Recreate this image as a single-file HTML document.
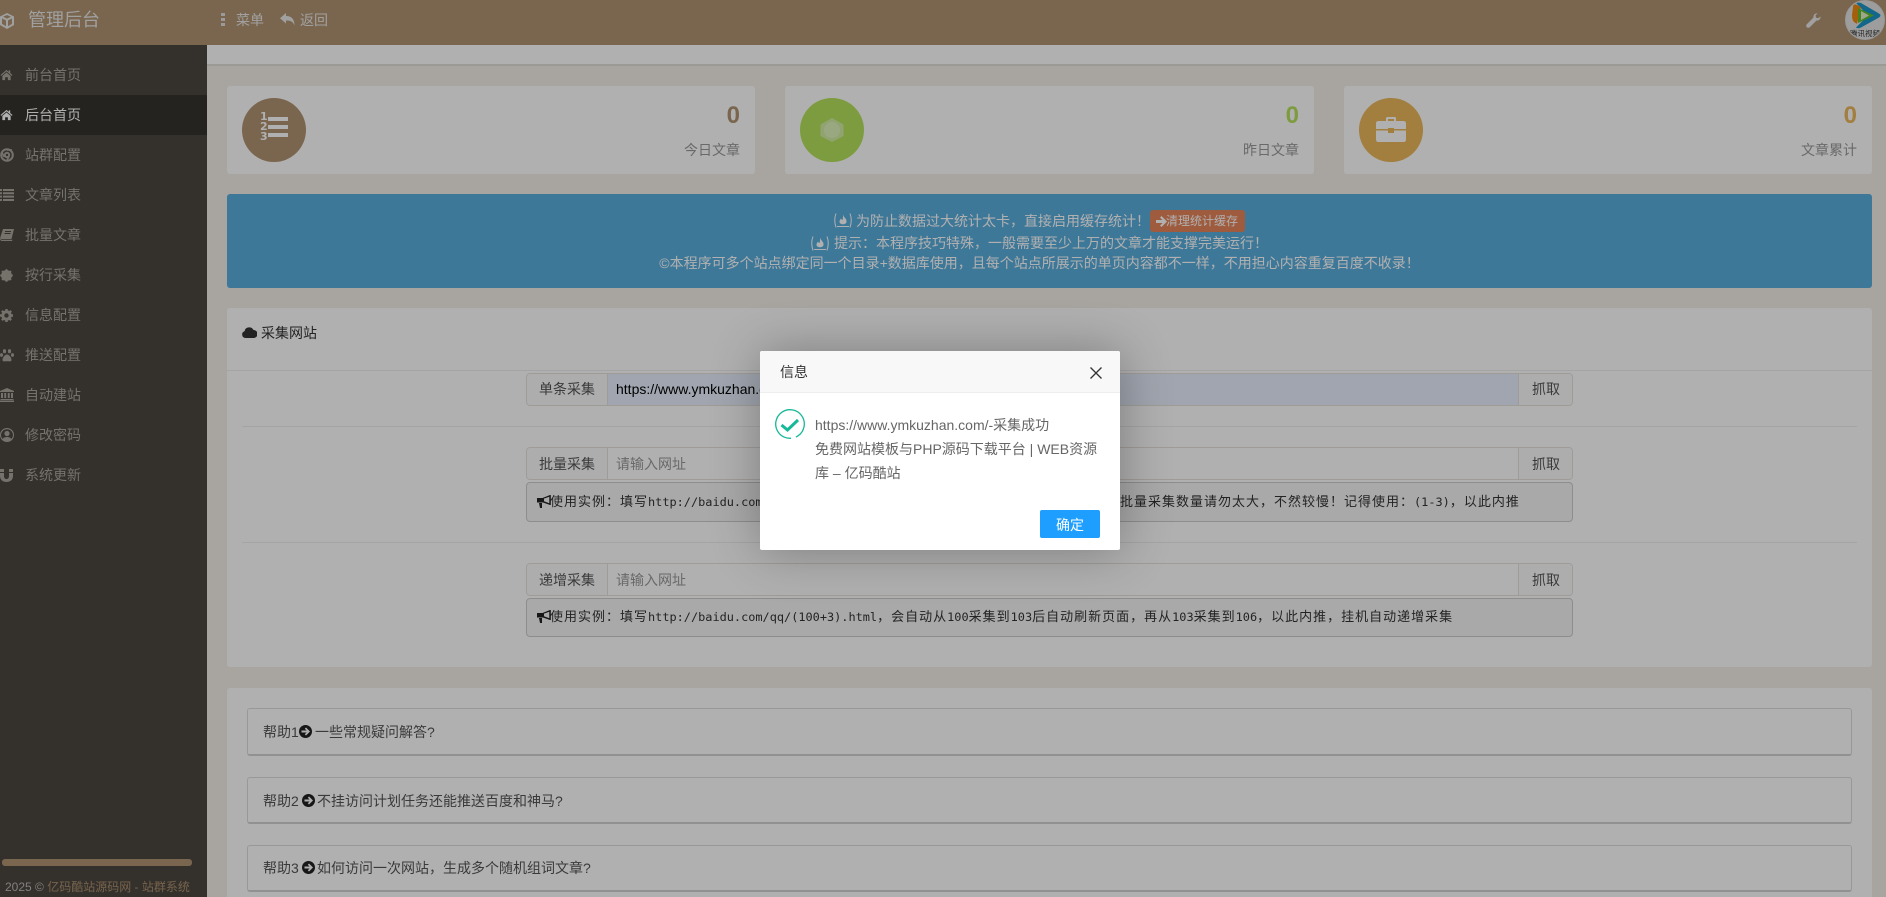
<!DOCTYPE html>
<html lang="zh"><head><meta charset="utf-8"><title>管理后台</title>
<style>
*{box-sizing:border-box}
html,body{margin:0;padding:0;width:1886px;height:897px;overflow:hidden}
body{position:relative;background:#f3f0ea;font:14px/20px "Liberation Sans","Noto Sans CJK SC",sans-serif;color:#555}
.a{position:absolute}
.t{position:absolute;white-space:nowrap;line-height:20px}
svg{display:block}
svg.a{position:absolute}
#nav{left:0;top:0;width:1886px;height:45px;background:#b19471}
#side{left:0;top:45px;width:207px;height:852px;background:#4c4640}
.si{color:#aaa59d}
.card{background:#fff;top:86px;height:88px;border-radius:3px}
.circ{top:98px;width:64px;height:64px;border-radius:50%}
.num{font-size:24px;font-weight:700;line-height:30px;top:101px}
.lab{top:140px;color:#999}
.grp{left:526px;width:1047px;height:33px;background:#fff;border:1px solid #e6e3dc;border-radius:4px}
.ad{background:#fbfbfb;color:#555}
.pre{left:526px;width:1047px;background:#f5f5f5;border:1px solid #ccc;border-radius:4px}
.pt{position:absolute;white-space:pre;font:13px/20px "Liberation Sans","Noto Sans CJK SC",sans-serif;letter-spacing:1px;color:#333}
.pt i{font:normal 11.9px/20px "DejaVu Sans Mono",monospace;letter-spacing:0}
.help{left:247px;width:1605px;background:#fff;border:1px solid #ddd;border-bottom:2px solid #d2d2d2;border-radius:3px}
.al{position:absolute;color:#fff;line-height:22px;white-space:nowrap}
#ov{left:0;top:0;width:1886px;height:897px;background:rgba(0,0,0,.31)}
#m{left:760px;top:351px;width:360px;height:199px;background:#fff;border-radius:2px;box-shadow:1px 1px 50px rgba(0,0,0,.3)}
</style></head><body>

<div class="a" id="nav"></div>
<svg class="a" style="left:-1px;top:12px" width="16" height="18" viewBox="0 0 16 18" fill="#e8e8e8"><path d="M8 1L15 4.5V13L8 17L1 13V4.5ZM8 3L4 4.8L8 6.6L12 4.8ZM3 6.4V11.9L7 14.3V8.4ZM13 6.4L9 8.4V14.3L13 11.9Z" fill-rule="evenodd"/></svg>
<div class="t" style="left:28px;top:9px;font-size:18px;line-height:22px;color:#e8e8e8">管理后台</div>
<svg class="a" style="left:221px;top:13px" width="5" height="13" fill="#e0e0e0"><rect x="0" width="4" height="3"/><rect y="5" width="4" height="3"/><rect y="10" width="4" height="3"/></svg>
<div class="t" style="left:236px;top:10px;color:#e8e8e8">菜单</div>
<svg class="a" style="left:280px;top:13px" width="15" height="13" viewBox="0 0 15 13" fill="#e8e8e8"><path d="M6 0V3C11 3 14.5 5.500 14.500 12.500C13 8.500 10.500 7.500 6 7.500V10.500L0 5.200Z"/></svg>
<div class="t" style="left:300px;top:10px;color:#e8e8e8">返回</div>
<svg class="a" style="left:1806px;top:13px" width="15" height="15" viewBox="0 0 15 15" fill="#e8e8e8"><path d="M14.500 3.500C14.800 5.800 13 8 10.500 7.500L4 14C3 15 1.500 15 .7 14.100C-.1 13.300 0 12 1 11L7.500 4.500C7.200 2 9 .2 11.500 .3L9.500 2.500L10 4.800L12.300 5.300Z"/></svg>
<div class="a" style="left:1845px;top:0;width:40px;height:40px;border-radius:50%;background:#e4e4e4;border:1px solid #ddd;overflow:hidden">
<svg class="a" style="left:4px;top:1px" width="32" height="27" viewBox="0 0 32 27"><path d="M6 1Q8 0 11 1L29 11.500Q32 13.500 29 15.500L11 25.500Q8 27 6 25.500L18 13.500Z" fill="#1c96c8"/><path d="M3 5Q3 2 6 2.500L11 5L7 22L4 20Q2 18 2 13Z" fill="#ee8a12"/><path d="M8 6L24 13.500L8 21Z" fill="#62bf2c"/><path d="M11 9L19 13.500L11 18Z" fill="#e6f0cf"/></svg>
<div class="t" style="left:4px;top:28px;font-size:7.500px;line-height:9px;color:#333">腾讯视频</div>
</div>

<div class="a" id="side"></div>
<div class="a" style="left:0;top:95px;width:207px;height:40px;background:#36332e"></div>
<div class="t si" style="left:25px;top:65px">前台首页</div>
<div class="t" style="left:25px;top:105px;color:#fff">后台首页</div>
<div class="t si" style="left:25px;top:145px">站群配置</div>
<div class="t si" style="left:25px;top:185px">文章列表</div>
<div class="t si" style="left:25px;top:225px">批量文章</div>
<div class="t si" style="left:25px;top:265px">按行采集</div>
<div class="t si" style="left:25px;top:305px">信息配置</div>
<div class="t si" style="left:25px;top:345px">推送配置</div>
<div class="t si" style="left:25px;top:385px">自动建站</div>
<div class="t si" style="left:25px;top:425px">修改密码</div>
<div class="t si" style="left:25px;top:465px">系统更新</div>
<!-- sidebar icons -->
<svg class="a" style="left:0;top:69px" width="13" height="12" viewBox="0 0 14 13" fill="#aaa59d"><path d="M7 1L.5 6.500L1.300 7.400L7 2.600L12.700 7.400L13.500 6.500L11 4.400V1.500H9.500V3.100ZM2.500 7.500V12H5.500V9H8.500V12H11.500V7.500L7 3.800Z"/></svg>
<svg class="a" style="left:0;top:109px" width="13" height="12" viewBox="0 0 14 13" fill="#fff"><path d="M7 1L.5 6.500L1.300 7.400L7 2.600L12.700 7.400L13.500 6.500L11 4.400V1.500H9.500V3.100ZM2.500 7.500V12H5.500V9H8.500V12H11.500V7.500L7 3.800Z"/></svg>
<svg class="a" style="left:0;top:148px" width="14" height="14" viewBox="0 0 14 14" fill="none" stroke="#aaa59d" stroke-width="2"><circle cx="7" cy="7" r="5.800"/><circle cx="7" cy="7" r="2.200"/><path d="M7 2H12M4 9L2 4M9 9L7 12" stroke-width="1.500"/></svg>
<svg class="a" style="left:0;top:189px" width="14" height="12" viewBox="0 0 14 12" fill="#aaa59d"><path d="M0 0H2V2H0ZM3 0H14V2H3ZM0 3.300H2V5.300H0ZM3 3.300H14V5.300H3ZM0 6.600H2V8.600H0ZM3 6.600H14V8.600H3ZM0 10H2V12H0ZM3 10H14V12H3Z"/></svg>
<svg class="a" style="left:0;top:229px" width="14" height="12" viewBox="0 0 14 12" fill="#aaa59d"><path d="M3 0H14L11.500 10H1C.2 10 0 9.300 .2 8.500ZM5 2V3H11V2ZM4.500 4V5H10.500V4ZM0 10Q.5 12 2 12H12L12.500 10.800H2Q1 10.800 1 10Z" fill-rule="evenodd"/></svg>
<svg class="a" style="left:0;top:269px" width="13" height="13" viewBox="0 0 13 13" fill="#aaa59d"><circle cx="6.500" cy="6.500" r="5.400"/><circle cx="6.500" cy="1.300" r="1.200"/><circle cx="6.500" cy="11.700" r="1.200"/><circle cx="1.300" cy="6.500" r="1.200"/><circle cx="11.700" cy="6.500" r="1.200"/><circle cx="2.800" cy="2.800" r="1.200"/><circle cx="10.200" cy="2.800" r="1.200"/><circle cx="2.800" cy="10.200" r="1.200"/><circle cx="10.200" cy="10.200" r="1.200"/></svg>
<svg class="a" style="left:0;top:309px" width="13" height="13" viewBox="0 0 13 13"><circle cx="6.500" cy="6.500" r="3.700" fill="none" stroke="#aaa59d" stroke-width="3"/><g stroke="#aaa59d" stroke-width="2.400"><path d="M6.500 0V13M0 6.500H13M1.900 1.900L11.100 11.100M11.100 1.900L1.900 11.100" stroke-dasharray="2.200 8.600"/></g></svg>
<svg class="a" style="left:0;top:349px" width="14" height="13" viewBox="0 0 14 13" fill="#aaa59d"><ellipse cx="4.500" cy="2.200" rx="1.600" ry="2.100"/><ellipse cx="9.500" cy="2.200" rx="1.600" ry="2.100"/><ellipse cx="1.500" cy="6" rx="1.500" ry="1.900"/><ellipse cx="12.500" cy="6" rx="1.500" ry="1.900"/><path d="M7 5.500C9.500 5.500 11.500 9 11.500 11C11.500 13 9 12.300 7 12.300C5 12.300 2.500 13 2.500 11C2.500 9 4.500 5.500 7 5.500Z"/></svg>
<svg class="a" style="left:0;top:388px" width="14" height="14" viewBox="0 0 14 14" fill="#aaa59d"><path d="M7 0L14 3V4H0V3ZM1 5H3V10H1ZM4.300 5H6.200V10H4.300ZM7.800 5H9.700V10H7.800ZM11 5H13V10H11ZM.5 11H13.500V12H.5ZM0 12.500H14V14H0Z"/></svg>
<svg class="a" style="left:0;top:428px" width="14" height="14" viewBox="0 0 14 14" fill="#aaa59d"><path d="M7 0A7 7 0 1 1 7 14A7 7 0 1 1 7 0ZM7 1.200A5.800 5.800 0 0 0 2.700 11C3.500 9.500 5 9 7 9C9 9 10.500 9.500 11.300 11A5.800 5.800 0 0 0 7 1.200Z" fill-rule="evenodd"/><circle cx="7" cy="5.500" r="2.600"/></svg>
<svg class="a" style="left:0;top:469px" width="13" height="13" viewBox="0 0 13 13" fill="#aaa59d"><path d="M0 0H4V3H0ZM9 0H13V3H9ZM0 4H4V7C4 9 5 10 6.500 10C8 10 9 9 9 7V4H13V7C13 11 10 13 6.500 13C3 13 0 11 0 7Z"/></svg>
<div class="a" style="left:2px;top:859px;width:190px;height:7px;background:#b19471;border-radius:3px"></div>
<div class="t" style="left:5px;top:877px;font-size:12px;color:#bbb">2025 © <span style="color:#ae9270">亿码酷站源码网 - 站群系统</span></div>

<!-- sub bar -->
<div class="a" style="left:207px;top:45px;width:1679px;height:19px;background:#fff"></div>
<div class="a" style="left:207px;top:64px;width:1679px;height:2px;background:#e2dfd8"></div>

<!-- cards -->
<div class="a card" style="left:227px;width:528px"></div>
<div class="a card" style="left:785px;width:529px"></div>
<div class="a card" style="left:1344px;width:528px"></div>
<div class="a circ" style="left:242px;background:#b19471"></div>
<div class="a circ" style="left:800px;background:#b5e35d"></div>
<div class="a circ" style="left:1359px;background:#ebb75c"></div>
<div class="t" style="left:260px;top:113px;font:700 11px/8px 'DejaVu Sans',sans-serif;color:#fff">1</div>
<div class="t" style="left:260px;top:123px;font:700 11px/8px 'DejaVu Sans',sans-serif;color:#fff">2</div>
<div class="t" style="left:260px;top:133px;font:700 11px/8px 'DejaVu Sans',sans-serif;color:#fff">3</div>
<div class="a" style="left:268px;top:117px;width:20px;height:4px;background:#fff"></div>
<div class="a" style="left:268px;top:125px;width:20px;height:4px;background:#fff"></div>
<div class="a" style="left:268px;top:133px;width:20px;height:4px;background:#fff"></div>
<svg class="a" style="left:820px;top:118px" width="24" height="24" viewBox="0 0 24 24"><path d="M12 0L23.500 6.500V18L12 24L.5 18V6.500Z" fill="#d3eda3"/><circle cx="12" cy="12" r="8" fill="#dff3bb"/></svg>
<svg class="a" style="left:1376px;top:116px" width="30" height="26" viewBox="0 0 30 26" fill="#fff"><path d="M10 5V2.500Q10 1 11.500 1H18.500Q20 1 20 2.500V5H27.500Q30 5 30 7.500V13H18V12H12V13H0V7.500Q0 5 2.500 5ZM12 3V5H18V3Z" fill-rule="evenodd"/><path d="M0 14.500H12V17H18V14.500H30V23.500Q30 26 27.500 26H2.500Q0 26 0 23.500Z"/></svg>
<div class="t num" style="right:1146px;color:#b19471">0</div>
<div class="t num" style="right:587px;color:#b5e35d">0</div>
<div class="t num" style="right:29px;color:#ebb75c">0</div>
<div class="t lab" style="right:1146px">今日文章</div>
<div class="t lab" style="right:587px">昨日文章</div>
<div class="t lab" style="right:29px">文章累计</div>

<!-- alert -->
<div class="a" style="left:227px;top:194px;width:1645px;height:94px;background:#5baede;border-radius:3px"></div>
<svg class="a" style="left:833px;top:213px" width="20" height="15" viewBox="0 0 20 15" fill="none" stroke="#fff"><path d="M3 .5Q.5 7 3 14.500M17 .5Q19.500 7 17 14.500"/><path d="M4 13.500H16"/><path d="M10 1.500C10.500 4.500 14 5.500 13.500 9C13 12 7 12 6.500 9C6.300 7.500 7.500 6.500 8 5.500C8.500 6.500 9 7 9.500 7C10.200 5.500 10 3.500 10 1.500Z" fill="#fff" stroke="none"/></svg>
<div class="al" style="left:856px;top:210px">为防止数据过大统计太卡，直接启用缓存统计！</div>
<div class="a" style="left:1150px;top:210px;width:95px;height:22px;background:#e5845a;border-radius:3px"></div>
<svg class="a" style="left:1156px;top:216px" width="11" height="11" viewBox="0 0 11 11" fill="#fff"><path d="M5.500 0L11 5.500L5.500 11L4 9.500L6.500 7H0V4H6.500L4 1.500Z"/></svg>
<div class="al" style="left:1166px;top:210px;font-size:12px">清理统计缓存</div>
<svg class="a" style="left:810px;top:236px" width="20" height="15" viewBox="0 0 20 15" fill="none" stroke="#fff"><path d="M3 .5Q.5 7 3 14.500M17 .5Q19.500 7 17 14.500"/><path d="M4 13.500H16"/><path d="M10 1.500C10.500 4.500 14 5.500 13.500 9C13 12 7 12 6.500 9C6.300 7.500 7.500 6.500 8 5.500C8.500 6.500 9 7 9.500 7C10.200 5.500 10 3.500 10 1.500Z" fill="#fff" stroke="none"/></svg>
<div class="al" style="left:834px;top:232px">提示：本程序技巧特殊，一般需要至少上万的文章才能支撑完美运行！</div>
<div class="al" style="left:227px;width:1625px;text-align:center;top:252px">©本程序可多个站点绑定同一个目录+数据库使用，且每个站点所展示的单页内容都不一样，不用担心内容重复百度不收录！</div>

<!-- main panel -->
<div class="a" style="left:227px;top:308px;width:1645px;height:359px;background:#fff;border-radius:3px"></div>
<div class="a" style="left:227px;top:370px;width:1645px;height:1px;background:#eee"></div>
<svg class="a" style="left:242px;top:326px" width="15" height="12" viewBox="0 0 15 12" fill="#333"><path d="M3.500 12A3.500 3.500 0 0 1 2.500 5.200A4.800 4.800 0 0 1 11.500 4A4 4 0 0 1 11.500 12Z"/></svg>
<div class="t" style="left:261px;top:323px;color:#333">采集网站</div>
<div class="a" style="left:242px;top:426px;width:1615px;height:1px;background:#eee"></div>
<div class="a" style="left:242px;top:542px;width:1615px;height:1px;background:#eee"></div>

<!-- group 1 -->
<div class="a grp" style="top:373px"></div>
<div class="a ad" style="left:527px;top:374px;width:81px;height:31px;border-right:1px solid #e6e3dc;border-radius:4px 0 0 4px"></div>
<div class="a" style="left:608px;top:374px;width:910px;height:31px;background:#e8f0fe"></div>
<div class="a ad" style="left:1518px;top:374px;width:54px;height:31px;border-left:1px solid #e6e3dc;border-radius:0 4px 4px 0"></div>
<div class="t" style="left:539px;top:379px">单条采集</div>
<div class="t" style="left:616px;top:379px;color:#000">https://www.ymkuzhan.com/</div>
<div class="t" style="left:1532px;top:379px">抓取</div>
<!-- group 2 -->
<div class="a grp" style="top:447px"></div>
<div class="a ad" style="left:527px;top:448px;width:81px;height:31px;border-right:1px solid #e6e3dc;border-radius:4px 0 0 4px"></div>
<div class="a ad" style="left:1518px;top:448px;width:54px;height:31px;border-left:1px solid #e6e3dc;border-radius:0 4px 4px 0"></div>
<div class="t" style="left:539px;top:454px">批量采集</div>
<div class="t" style="left:616px;top:454px;color:#999">请输入网址</div>
<div class="t" style="left:1532px;top:454px">抓取</div>
<div class="a pre" style="top:482px;height:40px"></div>
<svg class="a" style="left:537px;top:495px" width="14" height="13" viewBox="0 0 14 13" fill="#222"><path d="M13 0L13.800 0V10L13 10L6 7.500H0V3H5.500ZM12.300 1.800L7 3.600V6.300L12.300 8.200Z" fill-rule="evenodd"/><path d="M2 8H5V13H3Z"/></svg>
<div class="pt" style="left:550px;top:492px">使用实例：填写<i>http://baidu.com/qq/(1-3).html</i></div>
<div class="pt" style="left:1120px;top:492px">批量采集数量请勿太大，不然较慢！记得使用：<i>(1-3)</i>，以此内推</div>
<!-- group 3 -->
<div class="a grp" style="top:563px"></div>
<div class="a ad" style="left:527px;top:564px;width:81px;height:31px;border-right:1px solid #e6e3dc;border-radius:4px 0 0 4px"></div>
<div class="a ad" style="left:1518px;top:564px;width:54px;height:31px;border-left:1px solid #e6e3dc;border-radius:0 4px 4px 0"></div>
<div class="t" style="left:539px;top:570px">递增采集</div>
<div class="t" style="left:616px;top:570px;color:#999">请输入网址</div>
<div class="t" style="left:1532px;top:570px">抓取</div>
<div class="a pre" style="top:598px;height:39px"></div>
<svg class="a" style="left:537px;top:610px" width="14" height="13" viewBox="0 0 14 13" fill="#222"><path d="M13 0L13.800 0V10L13 10L6 7.500H0V3H5.500ZM12.300 1.800L7 3.600V6.300L12.300 8.200Z" fill-rule="evenodd"/><path d="M2 8H5V13H3Z"/></svg>
<div class="pt" style="left:550px;top:607px">使用实例：填写<i>http://baidu.com/qq/(100+3).html</i>，会自动从<i>100</i>采集到<i>103</i>后自动刷新页面，再从<i>103</i>采集到<i>106</i>，以此内推，挂机自动递增采集</div>

<!-- help -->
<div class="a" style="left:227px;top:688px;width:1645px;height:209px;background:#fff;border-radius:3px 3px 0 0"></div>
<div class="a help" style="top:708px;height:48px"></div>
<div class="a help" style="top:777px;height:47px"></div>
<div class="a help" style="top:845px;height:47px"></div>
<div class="t" style="left:263px;top:722px">帮助1</div>
<svg class="a" style="left:299px;top:725px" width="13" height="13" viewBox="0 0 13 13"><circle cx="6.500" cy="6.500" r="6.500" fill="#222"/><path d="M7 2.500L11 6.500L7 10.500L5.800 9.300L7.600 7.500H2.500V5.500H7.600L5.800 3.700Z" fill="#fff"/></svg>
<div class="t" style="left:315px;top:722px">一些常规疑问解答?</div>
<div class="t" style="left:263px;top:791px">帮助2</div>
<svg class="a" style="left:302px;top:794px" width="13" height="13" viewBox="0 0 13 13"><circle cx="6.500" cy="6.500" r="6.500" fill="#222"/><path d="M7 2.500L11 6.500L7 10.500L5.800 9.300L7.600 7.500H2.500V5.500H7.600L5.800 3.700Z" fill="#fff"/></svg>
<div class="t" style="left:317px;top:791px">不挂访问计划任务还能推送百度和神马?</div>
<div class="t" style="left:263px;top:858px">帮助3</div>
<svg class="a" style="left:302px;top:861px" width="13" height="13" viewBox="0 0 13 13"><circle cx="6.500" cy="6.500" r="6.500" fill="#222"/><path d="M7 2.500L11 6.500L7 10.500L5.800 9.300L7.600 7.500H2.500V5.500H7.600L5.800 3.700Z" fill="#fff"/></svg>
<div class="t" style="left:317px;top:858px">如何访问一次网站，生成多个随机组词文章?</div>

<div class="a" id="ov"></div>

<!-- modal -->
<div class="a" id="m">
<div class="a" style="left:0;top:0;width:360px;height:42px;background:#f8f8f8;border-bottom:1px solid #eee;border-radius:2px 2px 0 0"></div>
<div class="t" style="left:20px;top:11px;color:#333">信息</div>
<svg class="a" style="left:330px;top:16px" width="12" height="12" viewBox="0 0 12 12" stroke="#333" stroke-width="1.300"><path d="M.5 .5L11.500 11.500M11.500 .5L.5 11.500"/></svg>
<svg class="a" style="left:15px;top:58px" width="30" height="30" viewBox="0 0 30 30" fill="none" stroke="#16b998"><circle cx="15" cy="15" r="14.300" stroke-width="1.300" stroke-dasharray="70 5" transform="rotate(145 15 15)"/><path d="M6.500 16L12.500 21L23 11" stroke-width="3"/></svg>
<div class="a" style="left:55px;top:62px;width:290px;line-height:24px;color:#666">https://www.ymkuzhan.com/-采集成功<br>免费网站模板与PHP源码下载平台 | WEB资源<br>库 – 亿码酷站</div>
<div class="a" style="left:280px;top:159px;width:60px;height:28px;background:#1e9fff;border-radius:2px;color:#fff;text-align:center;line-height:30px">确定</div>
</div>
</body></html>
